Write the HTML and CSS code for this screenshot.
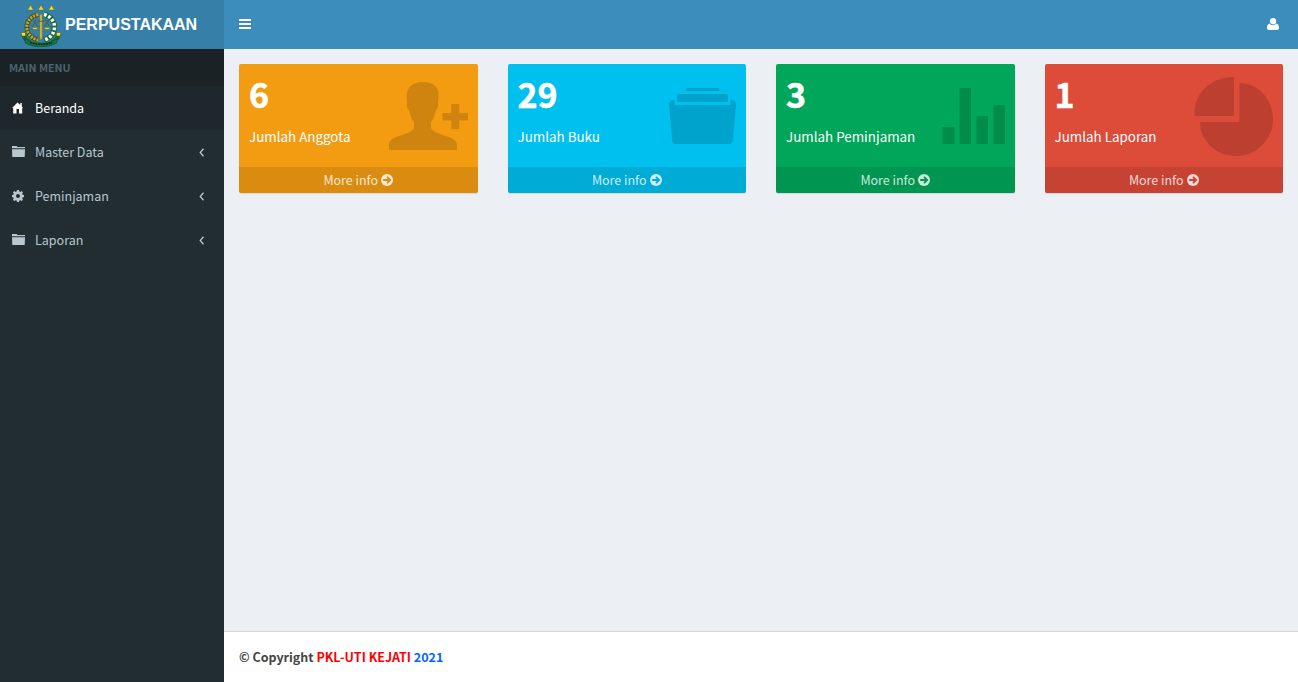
FILE: index.html
```html
<!DOCTYPE html>
<html lang="id">
<head>
<meta charset="utf-8">
<title>Perpustakaan</title>
<link rel="stylesheet" href="styles.css">
</head>
<body>
<div class="app">
  <aside class="sidebar">
    <a class="brand">
      <svg class="crest" viewBox="0 0 42 42">
        <g fill="#eee01f" stroke="#4a5a2a" stroke-width=".4">
          <path d="M10.500 0l1.300 2.500L13.500 5h-6l1.700-2.500zM21 0l1.300 2.500L24 5h-6l1.700-2.500zM31.500 0l1.300 2.500L34.500 5h-6l1.700-2.500z"/>
        </g>
        <path d="M18 9.500C3 13 3 31 18 35" fill="none" stroke="#444f18" stroke-width="4.500"/>
        <path d="M18 9.500C3 13 3 31 18 35" fill="none" stroke="#c4ae32" stroke-width="3" stroke-dasharray="2 1.200"/>
        <path d="M24 9.500C38 13 38 31 24 35" fill="none" stroke="#176b38" stroke-width="5.500"/>
        <path d="M24 9.500C38 13 38 31 24 35" fill="none" stroke="#fff" stroke-width="3.500" stroke-dasharray="2.700 1.800"/>
        <path d="M1 29l5-.5 1 4 4 3-2 3-6-4zM41 29l-5-.5-1 4-4 3 2 3 6-4z" fill="#176b38"/>
        <path d="M4 33c9 7 25 7 34 0l-1.500 5c-9 5-22 5-31 0z" fill="#13793c" stroke="#163f2c" stroke-width=".6"/>
        <path d="M10 37.500c7 2.500 15 2.500 22 0" fill="none" stroke="#092e1b" stroke-width="1.500" stroke-dasharray="2 .7"/>
        <path d="M1 27.500h4.500v3.500H2zM41 27.500h-4.500v3.500H40z" fill="#f4e43a" stroke="#444f18" stroke-width=".5"/>
        <path d="M19.700 10.500l1.300-2 1.300 2V33L21 36l-1.300-3z" fill="#d0bd32" stroke="#65611f" stroke-width=".5"/>
        <path d="M13 16.500q4-2 8 0 4-2 8 0M15 17l-3 6m3-6l3 6M27 17l-3 6m3-6l3 6" fill="none" stroke="#4b5b26" stroke-width=".8"/>
        <path d="M11.500 22.500h7q-3.500 4-7 0zM23.500 22.500h7q-3.500 4-7 0z" fill="#f0da2b" stroke="#555e20" stroke-width=".4"/>
      </svg>
      <span class="brand-name">PERPUSTAKAAN</span>
    </a>
    <div class="menu-title">MAIN MENU</div>
    <nav class="menu">
      <a class="menu-item active">
        <svg class="menu-icon" viewBox="0 0 14 14"><path d="M5.500 1.400L0 7h1.200v5.500h3.300V8h2.500v4.500h3.200V7H11L9.800 5.500V2H8.300v2z"/></svg>
        <span>Beranda</span>
      </a>
      <a class="menu-item">
        <svg class="menu-icon" viewBox="0 0 14 14"><path d="M0 1h4.500l1 1H13v1.300H0zM0 4.200h13l-.3 7.800H.3z"/></svg>
        <span>Master Data</span>
        <svg class="chevron" viewBox="0 0 6 10"><path d="M4.500 1.700L1.200 5.500l3.300 3.800"/></svg>
      </a>
      <a class="menu-item">
        <svg class="menu-icon" viewBox="0 0 14 14"><path fill-rule="evenodd" d="M5 1h2l.4 1.500.9.400 1.400-.8 1.200 1.200-.7 1.500.4.900L12 6v2l-1.400.4-.4.900.7 1.500-1.200 1.200-1.500-.8-.8.400L7 13H5l-.4-1.400-.9-.4-1.500.8L1 10.800l.7-1.500-.3-.9L0 8V6l1.400-.3.3-.9L1 3.300l1.200-1.200 1.500.8.9-.4zM6 5a2 2 0 1 0 0 4 2 2 0 0 0 0-4z"/></svg>
        <span>Peminjaman</span>
        <svg class="chevron" viewBox="0 0 6 10"><path d="M4.500 1.700L1.200 5.500l3.300 3.800"/></svg>
      </a>
      <a class="menu-item">
        <svg class="menu-icon" viewBox="0 0 14 14"><path d="M0 1h4.500l1 1H13v1.300H0zM0 4.200h13l-.3 7.800H.3z"/></svg>
        <span>Laporan</span>
        <svg class="chevron" viewBox="0 0 6 10"><path d="M4.500 1.700L1.200 5.500l3.300 3.800"/></svg>
      </a>
    </nav>
  </aside>
  <div class="page">
    <header class="topbar">
      <svg class="bars" viewBox="0 0 12 10"><path d="M0 0h12v2H0zM0 4h12v2H0zM0 8h12v2H0z"/></svg>
      <svg class="user" viewBox="0 0 12 12"><path d="M9.200 3.200A3.200 3.200 0 1 1 2.800 3.200a3.200 3.200 0 0 1 6.400 0zM2.500 5.400C.7 6 0 7.800 0 10c0 1.300.8 2 2 2h8c1.200 0 2-.7 2-2 0-2.200-.7-4-2.500-4.600a4.300 4.300 0 0 1-7 0z"/></svg>
    </header>
    <main class="cards">
      <section class="card orange">
        <div class="card-body">
          <div><div class="number">6</div><div class="label">Jumlah Anggota</div></div>
          <svg class="art" width="79" height="80" viewBox="0 0 79 80"><path d="M0 73v-5c0-5 3-6 7-8 8-3 18-5 18-10v-5c-2-2-4-7-5-12-3-2-2-6-2-9C16 11 23 5 34 5s18 6 15 19c0 3 1 7-2 9-1 5-3 10-5 12v5c0 5 10 7 18 10 4 2 8 4 8 8v5zM62.300 27h8v9H79v7.500h-8.700V52h-8v-8.500H53.500V36h8.800z"/></svg>
        </div>
        <a class="more">More info <svg class="arrow" viewBox="0 0 12 12"><circle cx="6" cy="6" r="6"/><path d="M2.200 6h7M6 2.800L9.200 6 6 9.200"/></svg></a>
      </section>
      <section class="card cyan">
        <div class="card-body">
          <div><div class="number">29</div><div class="label">Jumlah Buku</div></div>
          <svg class="art" width="67" height="80" viewBox="0 0 67 80"><path d="M18 11h31q1.300 0 1.800 3H16.500q.2-3 1.500-3zM10 17h47q2 0 2 2v6H8v-6q0-2 2-2zM5.500 22.500V28h56v-5.500q5.500 1 5.500 5l-3 35q-.5 4.500-4 4.500H7q-4 0-4-4.500l-3-35q0-4 5.500-5z"/></svg>
        </div>
        <a class="more">More info <svg class="arrow" viewBox="0 0 12 12"><circle cx="6" cy="6" r="6"/><path d="M2.200 6h7M6 2.800L9.200 6 6 9.200"/></svg></a>
      </section>
      <section class="card green">
        <div class="card-body">
          <div><div class="number">3</div><div class="label">Jumlah Peminjaman</div></div>
          <svg class="art" width="63" height="80" viewBox="0 0 63 80"><path d="M.5 50h12v17H.5zM17.500 11h11.500v56H17.500zM34.500 39H46v28H34.500zM51.500 28H63v39H51.500z"/></svg>
        </div>
        <a class="more">More info <svg class="arrow" viewBox="0 0 12 12"><circle cx="6" cy="6" r="6"/><path d="M2.200 6h7M6 2.800L9.200 6 6 9.200"/></svg></a>
      </section>
      <section class="card red">
        <div class="card-body">
          <div><div class="number">1</div><div class="label">Jumlah Laporan</div></div>
          <svg class="art" width="79" height="80" viewBox="0 0 79 80"><path d="M40 0v39H.500C-.5 18 15 0 40 0zM45.500 6C64 6 79 22 79 42.500S62 79 42 79 6 64 6 45h39.500z"/></svg>
        </div>
        <a class="more">More info <svg class="arrow" viewBox="0 0 12 12"><circle cx="6" cy="6" r="6"/><path d="M2.200 6h7M6 2.800L9.200 6 6 9.200"/></svg></a>
      </section>
    </main>
    <footer class="footer">© Copyright <span class="org">PKL-UTI KEJATI</span> <span class="year">2021</span></footer>
  </div>
</div>
</body>
</html>
```

FILE: styles.css
```css
* { box-sizing: border-box; }
body { margin: 0; font-family: "Noto Sans CJK SC", "Noto Sans", sans-serif; font-size: 12.5px; line-height: 20px; }
svg { display: block; flex: none; }
.app { display: grid; grid-template-columns: 224px 1fr; height: 682px; }
.sidebar { background: #222d32; color: #b8c7ce; }
.brand { display: flex; align-items: center; height: 49px; padding-left: 20px; background: #367fa9; color: #fff; }
.crest { width: 42px; height: 42px; margin-top: 2px; }
.brand-name { margin-left: 3px; font: bold 16px/24px "Liberation Sans", Arial, sans-serif; }
.menu-title { height: 37px; padding: 9px; background: #1a2226; color: #4b646f; font-size: 10.7px; font-weight: 700; }
.menu-item { display: flex; align-items: center; height: 44px; padding: 0 19px 0 12px; }
.menu-item.active { background: #1e282c; color: #fff; }
.menu-icon { width: 14px; height: 14px; margin-right: 9px; fill: currentColor; }
.chevron { width: 6px; height: 10px; margin-left: auto; fill: none; stroke: currentColor; stroke-width: 1.3; }
.page { display: flex; flex-direction: column; background: #ecf0f5; min-width: 0; }
.topbar { display: flex; align-items: center; justify-content: space-between; height: 49px; padding: 0 19px 1px 15px; background: #3c8dbc; }
.bars { width: 12px; height: 10px; fill: #fff; }
.user { width: 12px; height: 12px; fill: #fff; }
.cards { flex: 1; display: grid; grid-template-columns: repeat(4, 1fr); align-items: start; gap: 30px; padding: 15px; }
.card { height: 129px; overflow: hidden; border-radius: 2px; box-shadow: 0 1px 1px rgba(0, 0, 0, .1); color: #fff; }
.card-body { display: flex; justify-content: space-between; height: 103px; padding: 9px 10px; }
.number { height: 42px; font-size: 34px; line-height: 42px; font-weight: 700; -webkit-text-stroke: .5px #fff; }
.label { margin-top: 11px; font-size: 13.4px; white-space: nowrap; }
.art { margin-top: 4px; fill: rgba(0, 0, 0, .15); }
.more { display: flex; align-items: center; justify-content: center; gap: 3px; height: 26px; background: rgba(0, 0, 0, .1); color: rgba(255, 255, 255, .8); }
.arrow { width: 12px; height: 12px; fill: currentColor; }
.arrow path { fill: none; stroke-width: 1.8; }
.orange { background: #f39c12; }
.orange .arrow path { stroke: #db8c10; }
.cyan { background: #00c0ef; }
.cyan .arrow path { stroke: #00add7; }
.green { background: #00a65a; }
.green .arrow path { stroke: #009551; }
.red { background: #dd4b39; }
.red .arrow path { stroke: #c74333; }
.footer { height: 51px; padding: 15px; border-top: 1px solid #d2d6de; background: #fff; color: #444; font-weight: 700; }
.org { color: #f00; }
.year { color: #06f; }
```
